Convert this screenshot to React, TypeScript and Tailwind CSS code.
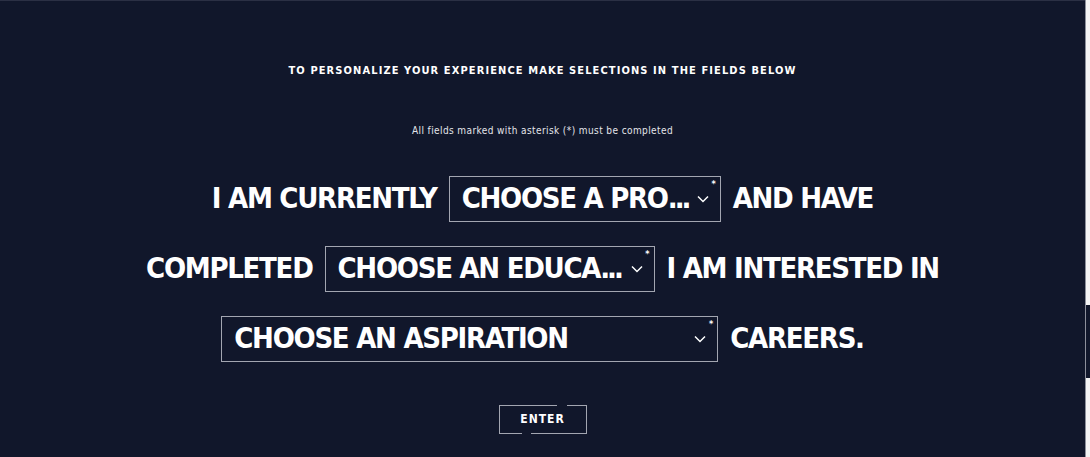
import React from "react";

const din = { fontFamily: '"DejaVu Sans Condensed", "DejaVu Sans", sans-serif' };

function Chevron() {
  return (
    <svg width="12" height="8" viewBox="0 0 12 8" fill="none" className="absolute right-[11px] top-1/2 -translate-y-1/2">
      <path d="M1 1.5l5 5 5-5" stroke="#ffffff" strokeWidth="1.5" />
    </svg>
  );
}

function FakeSelect({ label, dots, width }: { label: string; dots?: boolean; width: string }) {
  return (
    <div className={`relative flex h-[46px] items-center border border-[#a3a6b1] pl-3 ${width}`}>
      <span className="whitespace-nowrap">
        {label}
        {dots && <span className="tracking-[-3px]">...</span>}
      </span>
      <Chevron />
      <span className="absolute right-[4px] top-[3px] text-[9px] leading-none tracking-normal">*</span>
    </div>
  );
}

export default function App() {
  return (
    <div className="relative h-[457px] w-[1090px] overflow-hidden bg-[#11172b] text-white" style={din}>
      <div className="absolute left-0 right-0 top-0 h-px bg-[#2b3044]" />
      {/* scrollbar edge */}
      <div className="absolute right-0 top-0 h-full w-[5px] border-l border-[#8d909b] bg-[#f4f4f4]">
        <div className="mt-[305px] h-[73px] w-full bg-[#11172b]" />
      </div>

      <div className="flex flex-col items-center pr-[5px]">
        <p className="mt-[63px] text-[11px] font-bold tracking-[1.1px]">
          TO PERSONALIZE YOUR EXPERIENCE MAKE SELECTIONS IN THE FIELDS BELOW
        </p>
        <p className="mt-[43px] text-[10px] tracking-[0.4px] text-[#e4e5ea]">
          All fields marked with asterisk (*) must be completed
        </p>

        <div className="mt-[38px] flex flex-col items-center gap-[24px] text-[29px] font-bold leading-none tracking-[-1.3px]">
          <div className="flex items-center gap-3">
            <span>I AM CURRENTLY</span>
            <FakeSelect label="CHOOSE A PRO" dots width="w-[272px]" />
            <span>AND HAVE</span>
          </div>
          <div className="flex items-center gap-3">
            <span>COMPLETED</span>
            <FakeSelect label="CHOOSE AN EDUCA" dots width="w-[330px]" />
            <span>I AM INTERESTED IN</span>
          </div>
          <div className="flex items-center gap-3">
            <FakeSelect label="CHOOSE AN ASPIRATION" width="w-[497px]" />
            <span>CAREERS.</span>
          </div>
        </div>

        <button className="relative mt-[43px] flex h-[29px] w-[88px] items-center justify-center border border-[#a3a6b1] text-[12px] font-bold tracking-[1px]">
          <span className="absolute left-[57px] top-[-1px] h-px w-[10px] bg-[#11172b]" />
          <span className="absolute left-[22px] bottom-[-1px] h-px w-[9px] bg-[#11172b]" />
          ENTER
        </button>
      </div>
    </div>
  );
}
